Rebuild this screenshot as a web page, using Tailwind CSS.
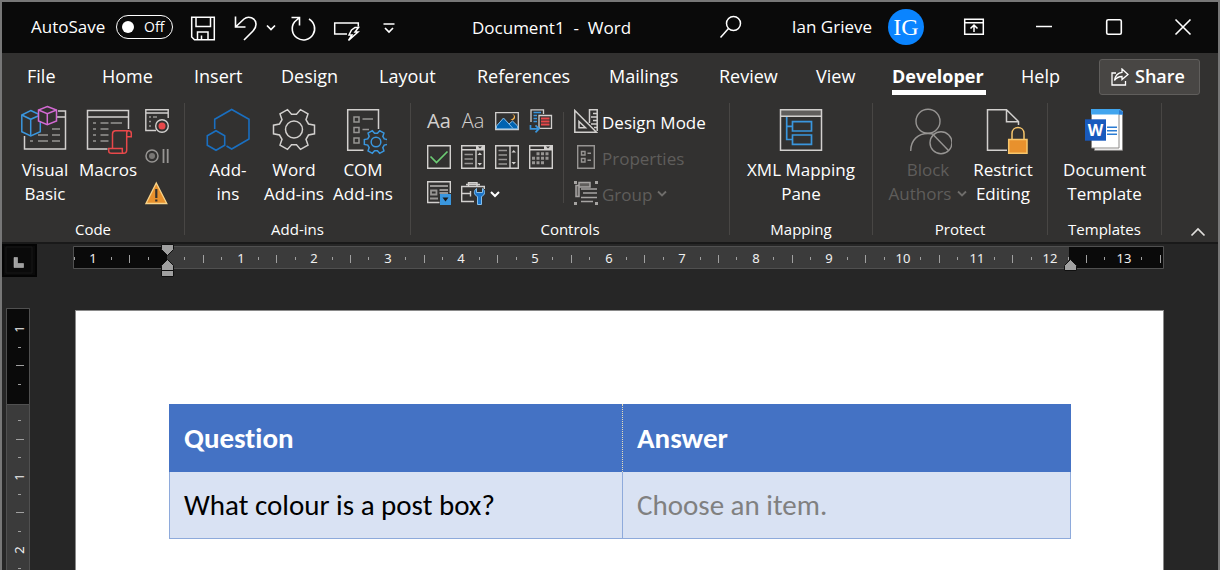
<!DOCTYPE html>
<html lang="en">
<head>
<meta charset="utf-8">
<title>Document1 - Word</title>
<script src="https://cdn.jsdelivr.net/npm/@tailwindcss/browser@4"></script>
</head>
<body class="flex h-screen flex-col overflow-hidden border-x-2 border-t-2 border-[#777777] bg-[#262626] font-['Open_Sans','Noto_Sans',sans-serif] text-white">

<svg class="hidden">
  <symbol id="gear" viewBox="-22 -22 44 44" overflow="visible">
    <path vector-effect="non-scaling-stroke" d="M14.5-5.5L20.5-4.3V4.3L14.5 5.5L12 9.8L14 15.6L6.5 19.9L2.5 15.3H-2.5L-6.5 19.9L-14 15.6L-12 9.8L-14.5 5.5L-20.5 4.3V-4.3L-14.5-5.5L-12-9.8L-14-15.6L-6.5-19.9L-2.5-15.3H2.5L6.5-19.9L14-15.6L12-9.8Z"/>
    <circle vector-effect="non-scaling-stroke" r="8.5"/>
  </symbol>
</svg>

<!-- Title bar -->
<header class="flex h-[51px] shrink-0 items-center bg-[#0a0a0a] text-[17px]">
  <div class="flex w-[470px] items-center pl-[29px]">
    <label for="autosave" class="mb-0.5 w-[85px] whitespace-nowrap">AutoSave</label>
    <span class="relative mb-0.5 h-6 w-[57px]">
      <input id="autosave" type="checkbox" role="switch" class="block h-6 w-[57px] appearance-none rounded-full border border-white before:mt-[5px] before:ml-[5px] before:block before:size-3 before:rounded-full before:bg-white">
      <span class="pointer-events-none absolute top-0 left-7 text-[14px] leading-6">Off</span>
    </span>
    <button aria-label="Save" class="ml-4"><svg class="block size-[28px]" viewBox="0 0 28 28" fill="none" stroke="#fff" stroke-width="1.5"><path d="M2.7 3.2H25.3V25.8H5.5L2.7 23ZM7 3.2V12.500H21.500V3.2M8.500 25.500V18H19V25.500M12.500 25.500V21.500"/></svg></button>
    <button aria-label="Undo" class="ml-3.5"><svg class="block h-7 w-7" viewBox="0 0 28 28" fill="none" stroke="#fff" stroke-width="1.6"><path d="M4.500 2.500V13H14.500M4.500 13L13 5C17.500 1.300 24.500 4 25 10C25.100 13 24 15 22 17L13 26"/></svg></button>
    <button aria-label="Undo options" class="ml-1.5"><svg class="block h-6 w-3" viewBox="0 0 12 24" fill="none" stroke="#fff" stroke-width="1.7"><path d="M2 9.500L6 13.500L10 9.500"/></svg></button>
    <button aria-label="Repeat" class="ml-3"><svg class="block size-[28px]" viewBox="0 0 28 28" fill="none" stroke="#fff" stroke-width="1.6"><path d="M2.500 3.500H10.500V11.500M10.500 3.500L5.500 8A11.200 11.200 0 1 0 20 5"/></svg></button>
    <button aria-label="Quick actions" class="ml-4"><svg class="block size-[28px]" viewBox="0 0 28 28" fill="none" stroke="#fff" stroke-width="1.5"><path d="M14 20H1.700V9H25.300V12.500M18.500 16L22 13.500H25.500L22 18H25L15.500 26.500L19 21H16Z"/></svg></button>
    <button aria-label="Customize toolbar" class="ml-4"><svg class="block size-6" viewBox="0 0 24 24" fill="none" stroke="#fff" stroke-width="1.700"><path d="M6.500 8H17.500M8 12L12 16L16 12"/></svg></button>
  </div>
  <h1 class="pt-px whitespace-pre">Document1  -  Word</h1>
  <div class="ml-auto flex items-center pb-0.5">
    <button aria-label="Search" class="mr-[49px]"><svg class="block size-[24px]" viewBox="0 0 24 24" fill="none" stroke="#fff" stroke-width="1.500"><circle cx="14.500" cy="8.500" r="7"/><path d="M9.500 13.500L1.500 22.500"/></svg></button>
    <span class="pt-px whitespace-nowrap">Ian Grieve</span>
    <button class="mr-[15px] ml-4 size-9 rounded-full bg-[#0a84ff] font-['Liberation_Serif',serif] text-2xl">IG</button>
    <button aria-label="Ribbon display options" class="flex w-[70px] justify-center"><svg class="size-[22px]" viewBox="0 0 22 22" fill="none" stroke="#fff" stroke-width="1.500"><path d="M1.700 3.200H20.300V18.300H1.700ZM1.700 6.800H20.300M11 16V9.500M7.500 12.500L11 9L14.500 12.500"/></svg></button>
    <button aria-label="Minimize" class="flex w-[70px] justify-center"><svg class="size-[18px]" viewBox="0 0 18 18" stroke="#fff" stroke-width="1.500"><path d="M1 8.500H17"/></svg></button>
    <button aria-label="Maximize" class="flex w-[69px] justify-center"><svg class="size-[18px]" viewBox="0 0 18 18" fill="none" stroke="#fff" stroke-width="1.600"><rect x="1.700" y="1.700" width="14.600" height="14.600" rx="1.500"/></svg></button>
    <button aria-label="Close" class="flex w-[70px] justify-center"><svg class="size-[18px]" viewBox="0 0 18 18" stroke="#fff" stroke-width="1.600"><path d="M1.500 1.500L16.500 16.500M16.500 1.500L1.500 16.500"/></svg></button>
  </div>
</header>

<!-- Ribbon tabs -->
<nav class="flex h-[47px] shrink-0 items-center justify-between bg-[#323130] pr-[18px] pl-[25px] text-[18px]">
  <div class="grid grid-cols-[75px_92px_87px_98px_98px_132px_110px_97px_76px_129px_50px] text-left whitespace-nowrap [&>button]:text-left">
    <button>File</button><button>Home</button><button>Insert</button><button>Design</button><button>Layout</button><button>References</button><button>Mailings</button><button>Review</button><button>View</button>
    <button class="h-[37px] w-[94px] justify-self-start border-b-[5px] border-white pt-[5px] font-bold">Developer</button>
    <button>Help</button>
  </div>
  <button class="flex h-9 w-[101px] items-center gap-1.5 rounded-[3px] border border-[#605e5c] bg-[#484644] pl-[11px] font-semibold"><svg class="h-[18px] w-[18px]" viewBox="0 0 18 18" fill="none" stroke="#fff" stroke-width="1.300"><path d="M5 5H1V17H14.500V13M11 1L17 6.500L11 11.500V8.500C8 8.500 5.500 9.500 3.500 12.500C4 8 7 4.500 11 4.300Z"/></svg>Share</button>
</nav>

<!-- Ribbon -->
<main class="flex h-[142px] shrink-0 bg-[#323130] pt-[3px] text-[17px] leading-6">
  <section class="flex h-[132px] w-[183px] shrink-0 flex-col justify-between border-r border-[#484644]">
    <div class="flex pl-[13px]">
      <button class="flex w-[60px] flex-col items-center pt-0.5"><svg class="mb-[3px] h-[50px] w-12" viewBox="0 0 48 50" fill="none" stroke-width="1.500">
        <path stroke="#d2d0ce" d="M3.500 31V44H44.500V6H37M36 12H44.500"/><path stroke="#979593" d="M31 24H39M17 30H27M31 30H39M9 36H12M17 36H27M31 36H39"/>
        <path stroke="#3a96dd" fill="#323130" d="M9.700 5.500L19.300 10V26.700L9.700 31L.8 26.700V10Z"/><path stroke="#3a96dd" d="M.8 10L9.700 14.300L19.300 10M9.700 14.300V31"/>
        <path stroke="#d36ad3" fill="#323130" d="M26.300 1.500L35.500 5V16L26.300 19.700L17.500 16V5Z"/><path stroke="#d36ad3" d="M17.500 5L26.300 8.700L35.500 5M26.300 8.700V19.700"/></svg>
        <span>Visual<br>Basic</span></button>
      <button class="flex w-[66px] flex-col items-center pt-0.5"><svg class="mb-[3px] h-[50px] w-12" viewBox="0 0 48 50" fill="none" stroke-width="1.500">
        <path stroke="#d2d0ce" d="M23.500 44H3.500V5.500H44.500V24M3.500 12H44.500"/><path stroke="#979593" d="M9 18H12M16.500 18H24.500M26.700 18H38M9 24H12M16.500 24H24.500M9 30H12M16.500 30H24.500M9 36H12M16.500 36H24.500"/>
        <path stroke="#e8484a" d="M28.500 43.500V29C28.500 26.500 29.500 25.700 31.500 25.700H44.500C46.500 25.700 47.300 26.500 47.300 28.500V31.700H42.700V45C42.700 47 41.500 48.300 39.500 48.300H27.500C25.500 48.300 24.700 47.500 24.700 46V43.500H38.300V46.500C38.300 47.500 38.800 48.300 39.500 48.300M42.700 31.700V28C42.700 26.500 43.500 25.700 44.500 25.700"/></svg>
        <span>Macros</span></button>
      <div class="flex flex-col gap-3 pt-1.5 pl-1">
        <button aria-label="Record Macro"><svg class="block size-6" viewBox="0 0 24 24" fill="none" stroke="#d2d0ce" stroke-width="1.400"><path d="M11 21.500H.8V.8H23.200V9M.8 4H23.200"/><path stroke="#979593" d="M4 8H6M8 8H12M4 12.500H6M4 17H6"/><circle cx="17" cy="17" r="6.300" fill="#323130"/><circle cx="17" cy="17" r="3.500" fill="#e8484a" stroke="none"/></svg></button>
        <button aria-label="Pause Recording"><svg class="block size-6" viewBox="0 0 24 24" fill="none" stroke="#979593" stroke-width="1.500"><circle cx="7" cy="11" r="6"/><circle cx="7" cy="11" r="3" fill="#797775" stroke="none"/><path stroke-width="1.800" d="M18.500 4V18M22.700 4V18"/></svg></button>
        <button aria-label="Macro Security"><svg class="block size-6" viewBox="0 0 24 24"><path d="M11.300 2L21.800 22.500H1Z" fill="#e8912d" stroke="#f8d48a" stroke-width="1.300"/><path d="M11.300 8V17M11.300 18.500V20.500" stroke="#323130" stroke-width="2.200"/></svg></button>
      </div>
    </div>
    <h2 class="text-center text-[15px] leading-[11px]">Code</h2>
  </section>

  <section class="flex h-[132px] w-[226px] shrink-0 flex-col justify-between border-r border-[#484644]">
    <div class="flex pl-[10px] whitespace-nowrap">
      <button class="flex w-[66px] flex-col items-center pt-0.5"><svg class="mb-[3px] h-[50px] w-12" viewBox="0 0 48 50" fill="none" stroke="#1a6fc0" stroke-width="1.600"><path d="M10.700 24V14.300L27.700 4.500L45 14.300V34L27.700 44L22.500 41M12 25.700L20.700 30.700V40.300L12 45.300L3.300 40.300V30.700Z"/></svg><span>Add-<br>ins</span></button>
      <button class="flex w-[66px] flex-col items-center pt-0.5"><svg class="mb-[3px] h-[50px] w-12" viewBox="0 0 48 50" fill="none" stroke="#d2d0ce" stroke-width="1.500"><use href="#gear" x="2" y="2.500" width="44" height="44"/></svg><span>Word<br>Add-ins</span></button>
      <button class="flex w-[72px] flex-col items-center pt-0.5"><svg class="mb-[3px] h-[50px] w-12" viewBox="0 0 48 50" fill="none" stroke="#d2d0ce" stroke-width="1.500"><path d="M24.500 45.300H8.700V4.700H39.500V24"/><path stroke="#979593" d="M15 12H20V17H15ZM15 22.500H20V27.500H15ZM15 33H20V38H15ZM23.500 14H34M23.500 24.500H30"/><use stroke="#3a96dd" href="#gear" x="24.500" y="24.500" width="25" height="25"/></svg><span>COM<br>Add-ins</span></button>
    </div>
    <h2 class="text-center text-[15px] leading-[11px]">Add-ins</h2>
  </section>

  <section class="flex h-[132px] w-[319px] shrink-0 flex-col justify-between border-r border-[#484644]">
    <div class="flex pt-1.5 pl-4">
      <div class="grid w-[136px] grid-cols-[24px_24px_24px_24px] content-start gap-x-2.5 gap-y-3">
        <button aria-label="Rich Text" class="h-6 text-[20px] text-[#d2d0ce]">Aa</button>
        <button aria-label="Plain Text" class="h-6 text-[20px] font-light text-[#d2d0ce]">Aa</button>
        <button aria-label="Picture"><svg class="block size-6" viewBox="0 0 24 24"><path fill="none" stroke="#d2d0ce" stroke-width="1.300" d="M.7 3.700H23.300V20.500H.7Z"/><path fill="#0063b1" stroke="#83beec" stroke-width="1" d="M1.500 19.800V17L8.500 9L14 15L17.500 12L22.600 17V19.800ZM14 15L18 19.500"/><path fill="#ffb84d" d="M17 5C20 6 19.500 10 15.500 10.500C18 12 20.500 10 20 7.500C19.700 6 18.500 5 17 5Z"/></svg></button>
        <button aria-label="Building Block Gallery"><svg class="block size-6" viewBox="0 0 24 24" fill="none" stroke-width="1.300"><path stroke="#d2d0ce" d="M2 13V.8H14.500V5M10 6.500H22.500V19.300H10Z"/><path stroke="#3a96dd" stroke-width="1.600" d="M4.500 3.500H12M4.500 6.500H8M4.500 9.500H8M4.500 12.500H8"/><path stroke="#e8484a" stroke-width="1.800" d="M12 9.500H20.500M12 12.500H20.500M12 15.500H20.500"/><path stroke="#3a96dd" stroke-width="1.700" d="M1.500 16V19.800H9.500M6.500 16.300L10 19.800L6.500 23.300"/></svg></button>
        <button aria-label="Check Box"><svg class="block size-6" viewBox="0 0 24 24" fill="none"><path stroke="#d2d0ce" stroke-width="1.400" d="M.7.7H23.300V23.300H.7Z"/><path stroke="#6ccb74" stroke-width="1.700" d="M3.500 11.500L9.500 17.500L20.500 6.500"/></svg></button>
        <button aria-label="Combo Box"><svg class="block size-6" viewBox="0 0 24 24" fill="none" stroke="#d2d0ce" stroke-width="1.400"><path d="M.7.7H23.300V23.300H.7ZM.7 4.700H23.300M15 4.700V23"/><path fill="#d2d0ce" stroke="none" d="M15 0H24V5H15ZM16.500 10L18.700 7.500L21 10ZM16.500 18L18.700 20.500L21 18Z"/><path fill="#323130" stroke="none" d="M17 1.500H21L19 3.500Z"/><path stroke="#979593" d="M3.500 9.500H12M3.500 14H12M3.500 18.500H12"/></svg></button>
        <button aria-label="Drop-Down List"><svg class="block size-6" viewBox="0 0 24 24" fill="none" stroke="#d2d0ce" stroke-width="1.400"><path d="M.7.7H23.300V23.300H.7ZM15 .7V23"/><path fill="#d2d0ce" stroke="none" d="M16.500 7.500L18.700 5L21 7.500ZM16.500 17L18.700 19.500L21 17Z"/><path stroke="#979593" d="M3.500 5.500H12M3.500 10H12M3.500 14.500H12M3.500 19H12"/></svg></button>
        <button aria-label="Date Picker"><svg class="block size-6" viewBox="0 0 24 24" fill="none" stroke="#d2d0ce" stroke-width="1.400"><path d="M.7.7H23.300V23.300H.7ZM.7 4.700H23.300"/><path fill="#d2d0ce" stroke="none" d="M15 0H24V5H15Z"/><path fill="#323130" stroke="none" d="M17 1.500H21L19 3.500Z"/><path stroke="#979593" stroke-width="3" stroke-dasharray="3 1.500" d="M7.500 8.800H20.500M3 13.300H20.500M3 17.800H16"/></svg></button>
        <button aria-label="Repeating Section"><svg class="block size-6" viewBox="0 0 24 24" fill="none" stroke="#d2d0ce" stroke-width="1.400"><path d="M12.500 21.500H.7V.7H23.300V12"/><path stroke="#979593" stroke-width="1.800" d="M3 5H21M4 9.500H9.500V13.500H4ZM12.500 9H21M12.500 12H21M3 17.500H11"/><path fill="#3a96dd" stroke="none" d="M13 13H24V24H13Z"/><path fill="#1b1a19" stroke="none" d="M15.500 16.500H21.500L18.500 20.500Z"/></svg></button>
        <button aria-label="Legacy Tools" class="flex gap-1"><svg class="block size-6 shrink-0" viewBox="0 0 24 24" fill="none" stroke="#d2d0ce" stroke-width="1.400"><path d="M13 20.500H.7V5.500H23.300V8M7.500 5V1.700H16V5M.7 12.500H10M9.500 10V15.500M5 3.500H19"/><path fill="#1b74c8" stroke="#83beec" stroke-width="1" d="M15.500 7.500C12.500 9.500 12.500 14 16.500 15.500V23.500H20.500V15.500C24.500 14 24.500 9.500 21.500 7.500V11.500H15.500Z"/></svg><svg class="block h-6 w-3 shrink-0" viewBox="0 0 12 24" fill="none" stroke="#fff" stroke-width="2"><path d="M2 11L6 15L10 11"/></svg></button>
      </div>
      <div class="mt-[3px] h-[91px] border-l border-[#484644]"></div>
      <div class="flex flex-col items-start gap-3 pl-2.5 leading-5 whitespace-nowrap">
        <button class="flex items-end gap-1"><svg class="size-6" viewBox="0 0 24 24" fill="none" stroke="#d2d0ce" stroke-width="1.500"><path d="M.8 1.500V23.200H22.500ZM5 12.500V18.700H11.500ZM15.500 14V.8H23.200V22"/><path d="M19 4.500H23M17 8H23M19 11.500H23M17 15H23M20 18.500H23"/></svg>Design Mode</button>
        <button disabled class="flex items-end gap-1 text-[#5f5d5b]"><svg class="size-6" viewBox="0 0 24 24" fill="none" stroke="#979593" stroke-width="1.400"><path d="M3.700.7H20.300V23.300H3.700ZM7.500 6.500H11V10H7.500ZM7.500 13.500H11V17H7.500ZM13.500 8.300H17M13.500 15.300H17"/></svg>Properties</button>
        <button disabled class="flex items-end gap-1 text-[#5f5d5b]"><svg class="size-6" viewBox="0 0 24 24" fill="none" stroke="#a6a4a2" stroke-width="1.500"><path fill="#a6a4a2" stroke="none" d="M0 0H3V3H0ZM21 0H24V3H21ZM0 21H3V24H0ZM21 21H24V24H21Z"/><path d="M7 8H23M9 12H23M7 16.500H23M7 20.500H19"/><path fill="#605e5c" d="M2 4.500V15.500H5V6H16V1.500H5V4.500Z"/></svg>Group<svg class="-ml-1 h-6 w-5" viewBox="0 0 20 24" fill="none" stroke="#6f6d6b" stroke-width="1.800"><path d="M6 10.500L10 14.500L14 10.500"/></svg></button>
      </div>
    </div>
    <h2 class="text-center text-[15px] leading-[11px]">Controls</h2>
  </section>

  <section class="flex h-[132px] w-[143px] shrink-0 flex-col justify-between border-r border-[#484644]">
    <button class="flex flex-col items-center pt-0.5 whitespace-nowrap"><svg class="mb-[3px] h-[50px] w-12" viewBox="0 0 48 50" fill="none" stroke-width="1.500"><path fill="#605e5c" d="M4 5H44V11H4Z"/><path stroke="#d2d0ce" d="M3.500 4.700H44.500V45.300H3.500ZM3.500 11.300H44.500"/><path stroke="#3a96dd" stroke-width="1.700" d="M9.700 12V34.500H15.500M9.700 21.300H15.500M15.500 16.700H34.500V26H15.500ZM15.500 30H34.500V39.300H15.500Z"/></svg><span>XML Mapping<br>Pane</span></button>
    <h2 class="text-center text-[15px] leading-[11px]">Mapping</h2>
  </section>

  <section class="flex h-[132px] w-[175px] shrink-0 flex-col justify-between border-r border-[#484644]">
    <div class="flex pl-[15px] whitespace-nowrap">
      <button disabled class="flex w-[80px] flex-col items-center pt-0.5 text-[#5f5d5b]"><svg class="mb-[3px] h-[50px] w-12" viewBox="0 0 48 50" fill="none" stroke="#979593" stroke-width="1.400"><circle cx="24" cy="16.300" r="12"/><path d="M6.700 46C6.700 35 14 28.500 24 28.500C26.500 28.500 28.500 28.800 30 29.500"/><circle cx="37" cy="37.700" r="11"/><path d="M29.500 30L44.500 45.500"/></svg><span>Block</span><span class="flex">Authors<svg class="h-6 w-4" viewBox="0 0 16 24" fill="none" stroke="#6f6d6b" stroke-width="1.800"><path d="M7 9.500L11 13.500L15 9.500"/></svg></span></button>
      <button class="flex w-[70px] flex-col items-center pt-0.5"><svg class="mb-[3px] h-[50px] w-[50px]" viewBox="-1 0 50 50" fill="none" stroke-width="1.500"><path stroke="#d2d0ce" d="M28 45.300H8.500V4.700H27.500L39.500 16.500V20M27.500 4.700V16.700H39.500"/><path fill="#e8912d" stroke="#f8c66b" d="M29.700 34.500H48V48.300H29.700Z"/><path stroke="#f8c66b" d="M33 34V28.500C33 20.500 45 20.500 45 28.500V34"/></svg><span>Restrict<br>Editing</span></button>
    </div>
    <h2 class="text-center text-[15px] leading-[11px]">Protect</h2>
  </section>

  <section class="flex h-[132px] w-[114px] shrink-0 flex-col justify-between border-r border-[#484644]">
    <button class="flex flex-col items-center pt-0.5"><svg class="mb-[3px] h-[50px] w-12" viewBox="0 0 48 50"><path fill="#fff" stroke="#8a8886" d="M13.500 6H41.500V45.300H13.500Z"/><path fill="#fff" stroke="#8a8886" d="M10.500 6H38V43H10.500Z"/><path fill="#41a5ee" d="M10 4H39L42 7V9.500H10Z"/><path fill="#2b7cd3" d="M38 5L42 7V9.500H38Z"/><path fill="#185abd" d="M4 14.300H25V35.700H4Z"/><path fill="none" stroke="#2b7cd3" stroke-width="1.500" d="M26 22.300H36M26 25.700H36M26 29.200H36"/><text x="14.500" y="30.500" text-anchor="middle" fill="#fff" font-weight="bold" font-size="16">W</text></svg><span>Document<br>Template</span></button>
    <h2 class="text-center text-[15px] leading-[11px]">Templates</h2>
  </section>

  <button aria-label="Collapse the Ribbon" class="mr-3 mb-1 ml-auto self-end"><svg class="block h-3 w-4" viewBox="0 0 16 12" fill="none" stroke="#e1dfdd" stroke-width="1.700"><path d="M1.500 9.500L8 3L14.500 9.500"/></svg></button>
</main>

<!-- Rulers and page -->
<div class="flex min-h-0 flex-1 border-t-2 border-[#191919] font-['Noto_Sans',sans-serif]">
  <aside class="flex w-[71px] shrink-0 flex-col">
    <button aria-label="Tab selector" class="block h-[33px] w-[35px] shrink-0 border-2 border-[#040404] bg-[#0a0a0a] pl-px"><svg class="block size-[29px]" viewBox="0 0 29 29"><path fill="none" stroke="#161616" d="M1 1H27V27H1Z"/><path fill="#a0a0a0" stroke="#c8c8c8" stroke-width="0.500" d="M9 11.500H12.500V17.500H18.500V21.500H9Z"/></svg></button>
    <svg id="vruler" class="mt-[31px] ml-1 block min-h-0 w-6 flex-1"><path fill="#3b3b3b" stroke="#505050" d="M.5.5H23.500V900H.5Z"/><path fill="#0a0a0a" stroke="#505050" d="M.5.5H23.500V96.500H.5Z"/></svg>
  </aside>
  <div class="flex flex-col">
    <svg id="hruler" class="block h-[36px] w-[1092px] shrink-0"><path fill="#3b3b3b" stroke="#505050" d="M.5 2.500H1090.500V24.500H.5Z"/><path fill="#0a0a0a" d="M1 3H94V24H1ZM996 3H1090V24H996Z"/></svg>
    <article class="mt-[30px] ml-[2px] w-[1089px] flex-1 border border-b-0 border-[#8a8a8a] bg-white px-[93px] pt-[93px] font-['Carlito','Lato',sans-serif] text-[29px] leading-9 text-black [font-variant-ligatures:none]">
      <table class="w-[902px] table-fixed border-collapse text-left">
        <thead><tr class="h-[68px] bg-[#4472c4] text-white"><th class="w-[453px] border-r border-l border-r-[#e8dcb8] border-l-[#4472c4] pl-[14px] font-bold [border-right-style:dotted]">Question</th><th class="border-r border-[#4472c4] pl-[14px] font-bold">Answer</th></tr></thead>
        <tbody><tr class="h-[66px] bg-[#d9e2f3]"><td class="border border-t-0 border-[#8eaadb] pl-[14px]">What colour is a post box?</td><td class="border border-t-0 border-[#8eaadb] pl-[14px] text-[#808080]">Choose an item.</td></tr></tbody>
      </table>
    </article>
  </div>
</div>

<script>
  const NS = 'http://www.w3.org/2000/svg';
  function add(parent, name, attrs, text) {
    const el = document.createElementNS(NS, name);
    for (const k in attrs) el.setAttribute(k, attrs[k]);
    if (text) el.textContent = text;
    parent.append(el);
  }
  // One centimetre is STEP pixels; quarter marks are short, half marks are tall.
  const STEP = 73.6;
  function ruler(id, origin, from, to, vertical) {
    const svg = document.getElementById(id);
    for (let q = from; q <= to; q++) {
      if (q === 0) continue;
      const p = Math.round(origin + q * STEP / 4);
      if (q % 4 === 0) {
        const t = { 'text-anchor': 'middle', fill: '#f0f0f0', 'font-size': 13 };
        if (vertical) t.transform = `translate(18 ${p}) rotate(-90)`;
        else { t.x = p; t.y = 19; }
        add(svg, 'text', t, String(Math.abs(q / 4)));
      } else {
        const len = q % 2 === 0 ? 8 : 3;
        const start = (vertical ? 14 : 15) - Math.ceil(len / 2);
        add(svg, 'rect', vertical
          ? { x: start, y: p - 1, width: len, height: 1, fill: '#a0a0a0' }
          : { x: p - 1, y: start, width: 1, height: len, fill: '#a0a0a0' });
      }
    }
  }
  ruler('hruler', 94, -5, 54, false);
  ruler('vruler', 95, -4, 9, true);
  const h = document.getElementById('hruler');
  for (const d of ['M88.500 .5H100.500V5.500L94.500 11.500L88.500 5.500Z', 'M94.500 15.500L100.500 21.500V26.500H88.500V21.500ZM88.500 26.500H100.500V32.500H88.500Z', 'M997.500 15.500L1003.500 21.500V26.500H991.500V21.500Z'])
    add(h, 'path', { d, fill: '#a0a0a0', stroke: '#101010' });
</script>
</body>
</html>
